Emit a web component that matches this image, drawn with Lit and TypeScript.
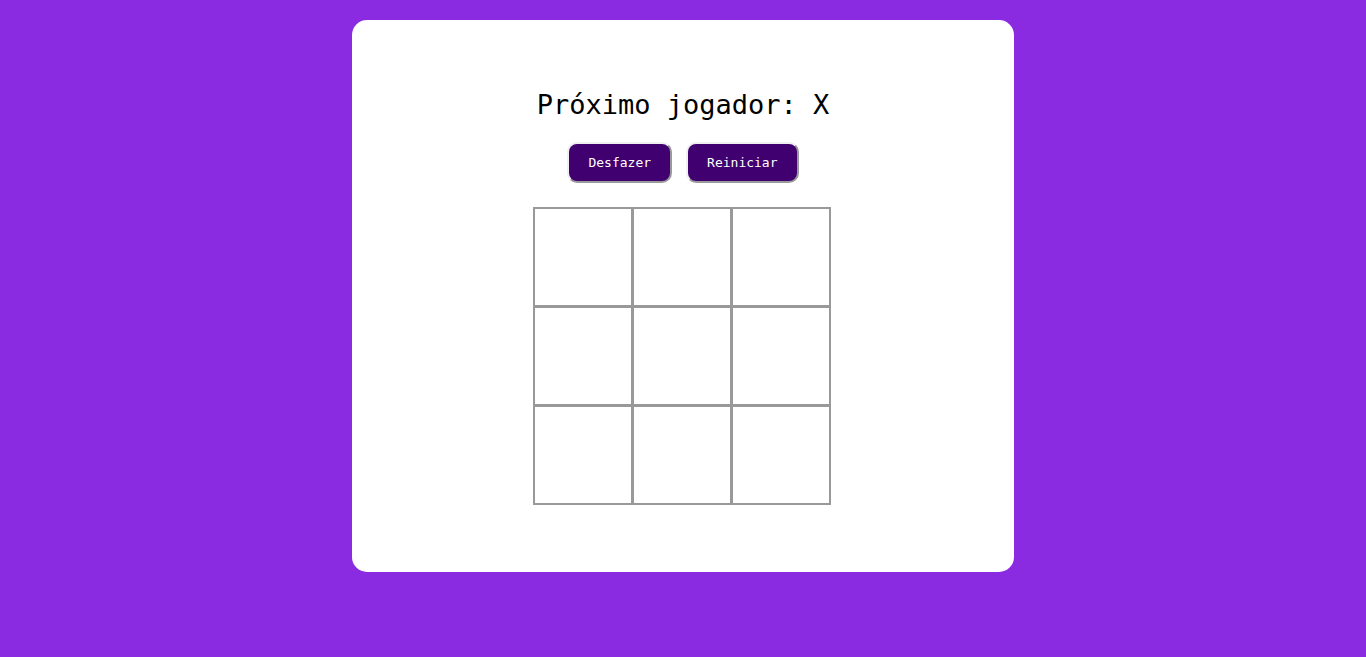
import { LitElement, html, css } from "lit";
import { customElement, state } from "lit/decorators.js";

@customElement("app-root")
export class AppRoot extends LitElement {
  static styles = css`
    :host {
      display: block;
      box-sizing: border-box;
      min-height: 100vh;
      padding: 20px;
      background: #8a2be2;
      color: #000;
      font-family: Consolas, "DejaVu Sans Mono", monospace;
    }
    .card {
      display: flex;
      flex-direction: column;
      align-items: center;
      box-sizing: border-box;
      max-width: 662px;
      margin: 0 auto;
      padding: 67px 20px;
      border-radius: 15px;
      background: #fff;
    }
    .status {
      margin: 0;
      font-size: 27px;
      font-weight: 400;
      line-height: 35px;
    }
    .actions {
      display: flex;
      gap: 14px;
      margin: 20px 0 24px;
    }
    .action {
      padding: 10px 19px;
      border: 2px solid;
      border-color: #f0f0f0 #9a9a9a #9a9a9a #f0f0f0;
      border-radius: 10px;
      background: #40006f;
      color: #fff;
      font: inherit;
      font-size: 13px;
      line-height: 17px;
      cursor: pointer;
    }
    .board {
      display: grid;
      grid-template-columns: repeat(3, 99px);
      grid-auto-rows: 99px;
      padding: 1px 1px 0 0;
    }
    .square {
      width: 100px;
      height: 100px;
      margin: -1px 0 0 -1px;
      padding: 0;
      border: 2px solid #999;
      background: #fff;
      color: #000;
      font: inherit;
      font-size: 48px;
      line-height: 48px;
    }
  `;

  @state() private moves: number[] = [];

  private get squares(): string[] {
    const squares = Array(9).fill("");
    this.moves.forEach((square, turn) => {
      squares[square] = turn % 2 ? "O" : "X";
    });
    return squares;
  }

  private get winner(): string {
    const squares = this.squares;
    const lines = [
      [0, 1, 2], [3, 4, 5], [6, 7, 8],
      [0, 3, 6], [1, 4, 7], [2, 5, 8],
      [0, 4, 8], [2, 4, 6],
    ];
    const line = lines.find(
      ([a, b, c]) => squares[a] && squares[a] === squares[b] && squares[a] === squares[c]
    );
    return line ? squares[line[0]] : "";
  }

  private play(index: number) {
    if (this.winner || this.moves.includes(index)) return;
    this.moves = [...this.moves, index];
  }

  render() {
    const status = this.winner
      ? `Vencedor: ${this.winner}`
      : `Próximo jogador: ${this.moves.length % 2 ? "O" : "X"}`;
    return html`
      <main class="card">
        <h1 class="status">${status}</h1>
        <div class="actions">
          <button class="action" @click=${() => (this.moves = this.moves.slice(0, -1))}>Desfazer</button>
          <button class="action" @click=${() => (this.moves = [])}>Reiniciar</button>
        </div>
        <div class="board">
          ${this.squares.map(
            (value, i) => html`<button
              class="square"
              aria-label="Casa ${i + 1}"
              @click=${() => this.play(i)}
            >${value}</button>`
          )}
        </div>
      </main>
    `;
  }
}
